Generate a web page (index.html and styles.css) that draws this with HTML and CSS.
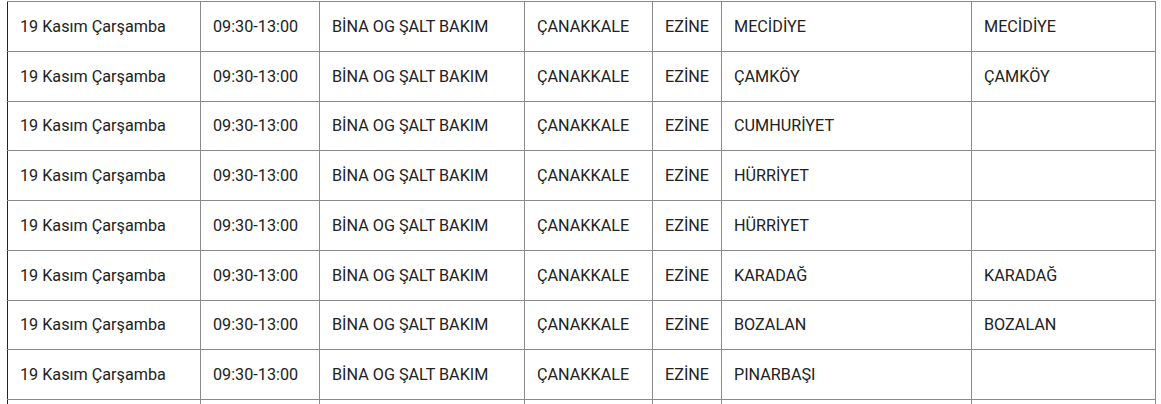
FILE: index.html
```html
<!DOCTYPE html>
<html lang="tr">
<head>
<meta charset="utf-8">
<link rel="stylesheet" href="styles.css">
</head>
<body>
<table class="kesinti">
  <colgroup>
    <col class="c-date"><col class="c-time"><col class="c-reason"><col class="c-city"><col class="c-district"><col class="c-hood"><col class="c-street">
  </colgroup>
  <tbody>
    <tr><td>19 Kasım Çarşamba</td><td>09:30-13:00</td><td>BİNA OG ŞALT BAKIM</td><td>ÇANAKKALE</td><td>EZİNE</td><td>MECİDİYE</td><td>MECİDİYE</td></tr>
    <tr><td>19 Kasım Çarşamba</td><td>09:30-13:00</td><td>BİNA OG ŞALT BAKIM</td><td>ÇANAKKALE</td><td>EZİNE</td><td>ÇAMKÖY</td><td>ÇAMKÖY</td></tr>
    <tr><td>19 Kasım Çarşamba</td><td>09:30-13:00</td><td>BİNA OG ŞALT BAKIM</td><td>ÇANAKKALE</td><td>EZİNE</td><td>CUMHURİYET</td><td></td></tr>
    <tr><td>19 Kasım Çarşamba</td><td>09:30-13:00</td><td>BİNA OG ŞALT BAKIM</td><td>ÇANAKKALE</td><td>EZİNE</td><td>HÜRRİYET</td><td></td></tr>
    <tr><td>19 Kasım Çarşamba</td><td>09:30-13:00</td><td>BİNA OG ŞALT BAKIM</td><td>ÇANAKKALE</td><td>EZİNE</td><td>HÜRRİYET</td><td></td></tr>
    <tr><td>19 Kasım Çarşamba</td><td>09:30-13:00</td><td>BİNA OG ŞALT BAKIM</td><td>ÇANAKKALE</td><td>EZİNE</td><td>KARADAĞ</td><td>KARADAĞ</td></tr>
    <tr><td>19 Kasım Çarşamba</td><td>09:30-13:00</td><td>BİNA OG ŞALT BAKIM</td><td>ÇANAKKALE</td><td>EZİNE</td><td>BOZALAN</td><td>BOZALAN</td></tr>
    <tr><td>19 Kasım Çarşamba</td><td>09:30-13:00</td><td>BİNA OG ŞALT BAKIM</td><td>ÇANAKKALE</td><td>EZİNE</td><td>PINARBAŞI</td><td></td></tr>
    <tr class="next-row"><td></td><td></td><td></td><td></td><td></td><td></td><td></td></tr>
  </tbody>
</table>
</body>
</html>
```
FILE: styles.css
```css
html, body {
  background: #fff;
}
body {
  margin: 1px 0 0 7px;
  font-family: Roboto, "Liberation Sans", Arial, sans-serif;
  font-size: 16.2px;
  color: #222;
}
.kesinti {
  border-collapse: collapse;
  table-layout: fixed;
  width: 1148px;
}
.c-date { width: 193px; }
.c-time { width: 119px; }
.c-reason { width: 205px; }
.c-city { width: 128px; }
.c-district { width: 69px; }
.c-hood { width: 250px; }
.c-street { width: 184px; }
.kesinti td {
  border: 1px solid #8a8a8a;
  height: 49.75px;
  padding: 1px 12px 0;
  line-height: 24px;
  vertical-align: middle;
  box-sizing: border-box;
  white-space: nowrap;
  overflow: hidden;
}
.kesinti td:first-child {
  border-left-color: #222;
}
```
